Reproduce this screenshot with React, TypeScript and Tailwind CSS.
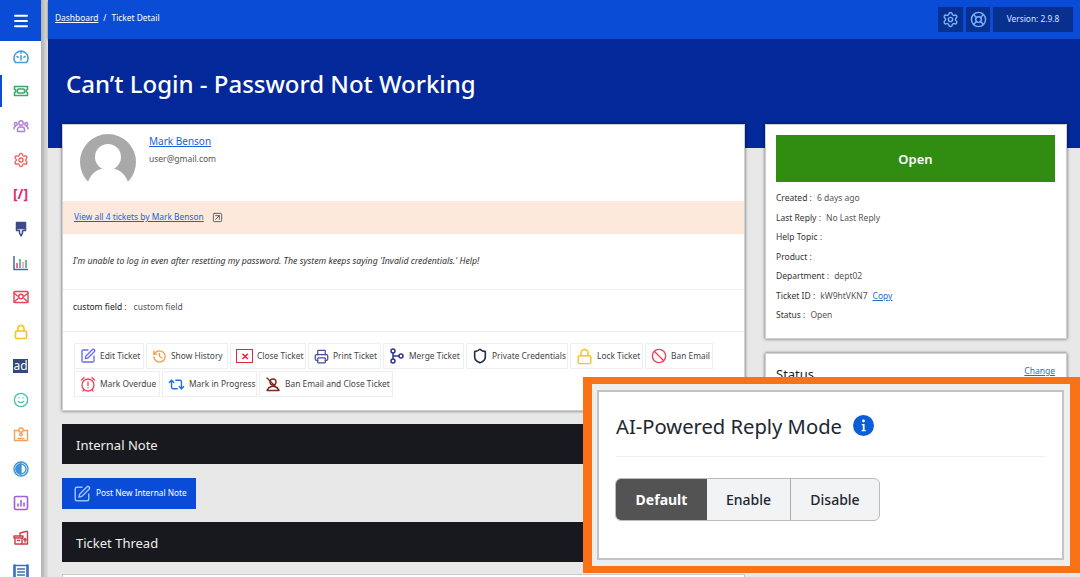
import React from "react";
import {
  Settings, Lock, Smile, SquarePen, History, Printer, Shield, Repeat2, Ban, LifeBuoy, Menu, SquareArrowUpRight,
} from "lucide-react";

type P = { children: React.ReactNode; w?: number; h?: number; sw?: number };
function I({ children, w = 16, h = 16, sw = 1.6 }: P) {
  return (
    <svg width={w} height={h} viewBox="0 0 16 16" fill="none" stroke="currentColor" strokeWidth={sw} strokeLinecap="round" strokeLinejoin="round">
      {children}
    </svg>
  );
}

const side: { c: string; el: React.ReactNode; active?: boolean }[] = [
  { c: "#4a9fd8", el: <I><path d="M2.5 13.5a7 7 0 1 1 11 0z" /><path d="M8 11V6.5M4 7.5l1 .7M12 7.5l-1 .7M8 3.5v.8" /></I> },
  { c: "#3aa76d", el: <I><path d="M1.5 3.5h13v3a1.5 1.5 0 0 0 0 3v3h-13v-3a1.5 1.5 0 0 0 0-3z" /><rect x="4.5" y="6" width="7" height="4" rx="1" /></I>, active: true },
  { c: "#b27fd6", el: <I sw={1.4}><circle cx="8" cy="5" r="2.2" /><circle cx="2.8" cy="6" r="1.5" /><circle cx="13.2" cy="6" r="1.5" /><path d="M4.5 13.5v-2a2.5 2.5 0 0 1 2.5-2.5h2a2.5 2.5 0 0 1 2.5 2.5v2z" /><path d="M1 11V9.8A1.5 1.5 0 0 1 2.5 8.5M15 11V9.8a1.5 1.5 0 0 0-1.5-1.3" /></I> },
  { c: "#ef5a5a", el: <Settings size={16} /> },
  { c: "#e6287a", el: <span className="text-[14px] font-bold leading-none">[/]</span> },
  { c: "#3f4a8a", el: <I sw={1.5}><path d="M3.5 1.5h9v6h-9z" fill="currentColor" /><path d="M3.5 7.5v2h3v2.5L8 15l1.5-3V9.5h3v-2" /></I> },
  { c: "#4a6a9a", el: (
    <svg width="16" height="16" viewBox="0 0 16 16" fill="none" strokeWidth="1.5">
      <path d="M1 1v13.5h14" stroke="#4a6a9a" />
      <path d="M4 13V8" stroke="#e8455a" /><path d="M7 13V4" stroke="#3f93d8" /><path d="M10 13V7" stroke="#f5a05a" /><path d="M13 13V5" stroke="#3aa76d" />
    </svg>
  ) },
  { c: "#e8455a", el: <I sw={1.4}><rect x="1" y="2.5" width="14" height="11" rx="1" /><path d="M1 4l3.5 3M15 4l-3.5 3M1 13l4-3.5M15 13l-4-3.5" /><circle cx="8" cy="7.5" r="2.3" /></I> },
  { c: "#f5c518", el: <I><rect x="2.5" y="7" width="11" height="7.5" rx="1.2" /><path d="M5 7V4.5a3 3 0 0 1 6 0V7" /></I> },
  { c: "#334a77", el: <span className="flex h-[14px] w-[15px] items-center justify-center bg-[#334a77] text-[12px] leading-none text-white">ad</span> },
  { c: "#45c4a0", el: <Smile size={16} /> },
  { c: "#f5a05a", el: <I sw={1.4}><path d="M5.5 3.5h-4v10h13v-10h-4" /><rect x="6" y="1" width="4" height="4" rx="1" /><circle cx="8" cy="7.5" r="1.3" /><path d="M5 11.5h6" /></I> },
  { c: "#3f93d8", el: <I sw={1.4}><circle cx="8" cy="8" r="7" /><path d="M8 3a5 5 0 0 0 0 10z" fill="currentColor" /><circle cx="8" cy="8" r="5" /></I> },
  { c: "#a15cd6", el: <I><rect x="1.5" y="1.5" width="13" height="13" rx="1.5" /><path d="M5 11V9M8 11V5.5M11 11V8" /></I> },
  { c: "#d23b4a", el: <I sw={1.4}><path d="M1 6h9v2H1zM2 8v6h7V8M4.5 10.5h2" /><path d="M7 6V3l6-1.5h1.5V14H9" /><path d="M12 12V8.5M10.8 9.7 12 8.5l1.2 1.2" /></I> },
  { c: "#3a6fb5", el: <I sw={1.4}><rect x="1.5" y="1.5" width="13" height="13" fill="none" /><path d="M1.5 1.5v13M14.5 1.5v13" strokeWidth={2.5} /><path d="M4.5 5h7M4.5 8h7M4.5 11h7" /></I> },
];

function Action({ icon, label, w }: { icon: React.ReactNode; label: string; w: string }) {
  return (
    <div className={`flex h-[26px] items-center gap-[4px] border border-[#eeeeee] bg-white pl-[5px] text-[8.4px] text-[#444444] ${w}`}>
      {icon}
      <span className="whitespace-nowrap">{label}</span>
    </div>
  );
}

function Row({ k, v, link }: { k: string; v?: string; link?: string }) {
  return (
    <div className="flex h-[19.5px] items-center text-[8.5px] text-[#444444]">
      <span className="text-[#333333]">{k} :</span>
      {v && <span className="ml-[5px] text-[#555555]">{v}</span>}
      {link && <span className="ml-[5px] text-[#1a73c8] underline">{link}</span>}
    </div>
  );
}

export default function App() {
  return (
    <div className="relative flex h-[577px] w-[1080px] overflow-hidden bg-[#e8e8e8] font-['Noto_Sans',sans-serif]">
      <aside className="flex h-full w-[41px] shrink-0 flex-col bg-white">
        <div className="flex h-[41px] shrink-0 items-center justify-center bg-[#0b4cd6] text-white">
          <Menu size={18} strokeWidth={2.5} />
        </div>
        <div className="-mt-[1px] flex flex-col">
          {side.map((s, i) => (
            <div key={i} className="relative flex h-[34.33px] shrink-0 items-center justify-center" style={{ color: s.c }}>
              {s.active && <div className="absolute left-0 top-[1px] h-[32px] w-[2px] bg-[#0b4cd6]" />}
              {s.el}
            </div>
          ))}
        </div>
      </aside>
      <div className="w-[7px] shrink-0 bg-gradient-to-r from-[#b0b0b0] to-[#e0e0e0]" />
      <main className="flex min-w-0 flex-1 flex-col">
        <header className="flex h-[39px] shrink-0 items-center justify-between bg-[#0b4cd6] pl-[7px] pr-[7px] text-[8.4px] text-white shadow-[0_1px_2px_rgba(0,0,0,0.6)]">
          <div className="-mt-[2px] flex gap-[5px]">
            <span className="underline">Dashboard</span>
            <span>/</span>
            <span>Ticket Detail</span>
          </div>
          <div className="flex gap-[3px]">
            <div className="flex h-[25px] w-[25px] items-center justify-center bg-[#08308f] text-[#7fb2ff]"><Settings size={17} /></div>
            <div className="flex h-[25px] w-[24px] items-center justify-center bg-[#08308f] text-[#7fb2ff]"><LifeBuoy size={17} /></div>
            <div className="flex h-[25px] w-[80px] items-center justify-center bg-[#08308f] text-[#d8e4ff]">Version: 2.9.8</div>
          </div>
        </header>
        <div className="flex h-[109px] shrink-0 items-start bg-[#03289a] pl-[18px] pt-[27px]">
          <h1 className="text-[24px] font-medium leading-[36px] text-white">Can’t Login - Password Not Working</h1>
        </div>
        <div className="-mt-[24px] flex gap-[20px] pl-[14px]">
          <div className="flex w-[683px] shrink-0 flex-col">
            <section className="h-[287px] border border-[#d0d0d0] bg-white shadow-[0_0_3px_rgba(0,0,0,0.6)]">
              <div className="flex h-[76px] pl-[17px] pt-[9px]">
                <svg width="56" height="56" viewBox="0 0 56 56" className="shrink-0">
                  <circle cx="28" cy="28" r="28" fill="#a9a9a9" />
                  <circle cx="28" cy="23" r="13" fill="#ffffff" />
                  <path d="M8 48 C14 29 42 29 48 48 L56 56 H0Z" fill="#ffffff" />
                </svg>
                <div className="ml-[13px]">
                  <div className="text-[10px] leading-[14px] text-[#1a5fe0] underline">Mark Benson</div>
                  <div className="mt-[5px] text-[8.5px] leading-[12px] text-[#555555]">user@gmail.com</div>
                </div>
              </div>
              <div className="flex h-[33px] items-center gap-[8px] bg-[#fce9dc] pl-[11px] text-[8.4px] text-[#1a5fe0]">
                <span className="underline">View all 4 tickets by Mark Benson</span>
                <SquareArrowUpRight size={11} className="text-[#555555]" />
              </div>
              <div className="flex h-[56px] items-center border-b border-[#eeeeee] pl-[10px] pt-[1px] text-[8.75px] italic text-[#333333]">
                I'm unable to log in even after resetting my password. The system keeps saying 'Invalid credentials.' Help!
              </div>
              <div className="flex h-[42px] items-center gap-[7px] border-b border-[#eeeeee] pb-[6px] pl-[10px] text-[8.5px]">
                <span className="text-[#222222]">custom field :</span>
                <span className="text-[#555555]">custom field</span>
              </div>
              <div className="flex flex-wrap gap-x-[2px] gap-y-[2px] pl-[11px] pr-[20px] pt-[11px]">
                <Action w="w-[70px]" label="Edit Ticket" icon={<SquarePen size={16} className="text-[#6a6ae8]" />} />
                <Action w="w-[82px]" label="Show History" icon={<History size={15} className="text-[#f59a3c]" />} />
                <Action w="w-[76px]" label="Close Ticket" icon={<span className="flex h-[14px] w-[17px] items-center justify-center border-[1.5px] border-[#e0283c] text-[10px] font-bold leading-none text-[#e0283c]">✕</span>} />
                <Action w="w-[73px]" label="Print Ticket" icon={<Printer size={15} className="text-[#4a4aa0]" />} />
                <Action w="w-[81px]" label="Merge Ticket" icon={<I sw={1.5}><g className="text-[#33338f]"><circle cx="4" cy="3" r="2" /><circle cx="4" cy="13" r="2" /><circle cx="12" cy="8" r="2" /><path d="M4 5v6M4 8h6" /></g></I>} />
                <Action w="w-[102px]" label="Private Credentials" icon={<Shield size={16} strokeWidth={2.4} className="text-[#1d2d50]" />} />
                <Action w="w-[73px]" label="Lock Ticket" icon={<Lock size={17} className="text-[#f5c518]" />} />
                <Action w="w-[68px]" label="Ban Email" icon={<Ban size={16} className="text-[#e8455a]" />} />
                <Action w="w-[86px]" label="Mark Overdue" icon={<span className="text-[#e8455a]"><I sw={1.3}><circle cx="8" cy="9" r="6" /><path d="M8 6v3.5M8 11.7v.1M1.5 4 4 1.5M14.5 4 12 1.5M4 14l-1 1M12 14l1 1" /></I></span>} />
                <Action w="w-[95px]" label="Mark in Progress" icon={<Repeat2 size={17} className="text-[#1a73e8]" />} />
                <Action w="w-[134px]" label="Ban Email and Close Ticket" icon={<span className="text-[#7a2a1a]"><I sw={1.4}><circle cx="8" cy="6" r="3" /><path d="M2 14.5h12l-2-3-4-1.5-4 1.5zM2 2l12 12" /></I></span>} />
              </div>
            </section>
            <div className="mt-[13px] flex h-[40px] items-center bg-[#17191e] pl-[14px] pt-[3px] text-[13px] text-[#eeeeee]">Internal Note</div>
            <div className="mt-[14px] flex h-[31px] w-[134px] items-center gap-[5px] bg-[#0b4cd6] pl-[11px] text-[8.3px] text-white">
              <SquarePen size={18} className="text-[#9cc0ff]" />
              <span>Post New Internal Note</span>
            </div>
            <div className="mt-[13px] flex h-[40px] items-center bg-[#17191e] pl-[14px] pt-[3px] text-[13px] text-[#eeeeee]">Ticket Thread</div>
            <div className="mt-[12px] h-[40px] border border-[#c8c8c8] bg-white" />
          </div>
          <div className="flex w-[302px] shrink-0 flex-col gap-[14px]">
            <section className="h-[215px] border border-[#d0d0d0] bg-white pl-[10px] pr-[11px] pt-[10px] shadow-[0_0_3px_rgba(0,0,0,0.6)]">
              <div className="flex h-[47px] items-center justify-center bg-[#308d12] pt-[2px] text-[13px] font-semibold text-white">Open</div>
              <div className="mt-[7px] flex flex-col">
                <Row k="Created" v="6 days ago" />
                <Row k="Last Reply" v="No Last Reply" />
                <Row k="Help Topic" />
                <Row k="Product" />
                <Row k="Department" v="dept02" />
                <Row k="Ticket ID" v="kW9htVKN7" link="Copy" />
                <Row k="Status" v="Open" />
              </div>
            </section>
            <section className="flex h-[100px] items-start justify-between border border-[#d0d0d0] bg-white pl-[10px] pr-[11px] pt-[11px] shadow-[0_0_3px_rgba(0,0,0,0.6)]">
              <span className="text-[13px] leading-[18px] text-[#222222]">Status</span>
              <span className="text-[8.5px] leading-[12px] text-[#1a73c8] underline">Change</span>
            </section>
          </div>
        </div>
      </main>

      <div className="absolute left-[583px] top-[377px] h-[196px] w-[497px] border-y-[7px] border-l-[9px] border-r-[10px] border-[#f97316] bg-[#eeeeee] pb-[5px] pl-[5px] pr-[6px] pt-[6px]">
        <div className="h-[170px] border-[2px] border-[#c4c4c4] bg-white pl-[17px] pr-[17px]">
          <div className="flex h-[65px] items-center gap-[11px] border-b border-[#eeeeee] pt-[4px]">
            <span className="text-[20.2px] text-[#222630]">AI-Powered Reply Mode</span>
            <svg width="21" height="21" viewBox="0 0 21 21" className="-mt-[1px]">
              <circle cx="10.5" cy="10.5" r="10.5" fill="#0b5ed7" />
              <circle cx="10.5" cy="6" r="1.4" fill="#ffffff" />
              <path d="M8.8 9h2.8v6h1.2v1.3H8.6V15h1.2v-4.7h-1z" fill="#ffffff" />
            </svg>
          </div>
          <div className="-ml-[1px] mt-[21px] flex h-[43px] w-[265px] overflow-hidden rounded-[6px] border border-[#bbbbbb] bg-[#f1f3f4] text-[14px] font-medium text-[#222630]">
            <div className="flex w-[91px] items-center justify-center bg-[#535353] font-bold text-white">Default</div>
            <div className="flex w-[84px] items-center justify-center border-r border-[#aaaaaa]">Enable</div>
            <div className="flex flex-1 items-center justify-center">Disable</div>
          </div>
        </div>
      </div>
    </div>
  );
}
